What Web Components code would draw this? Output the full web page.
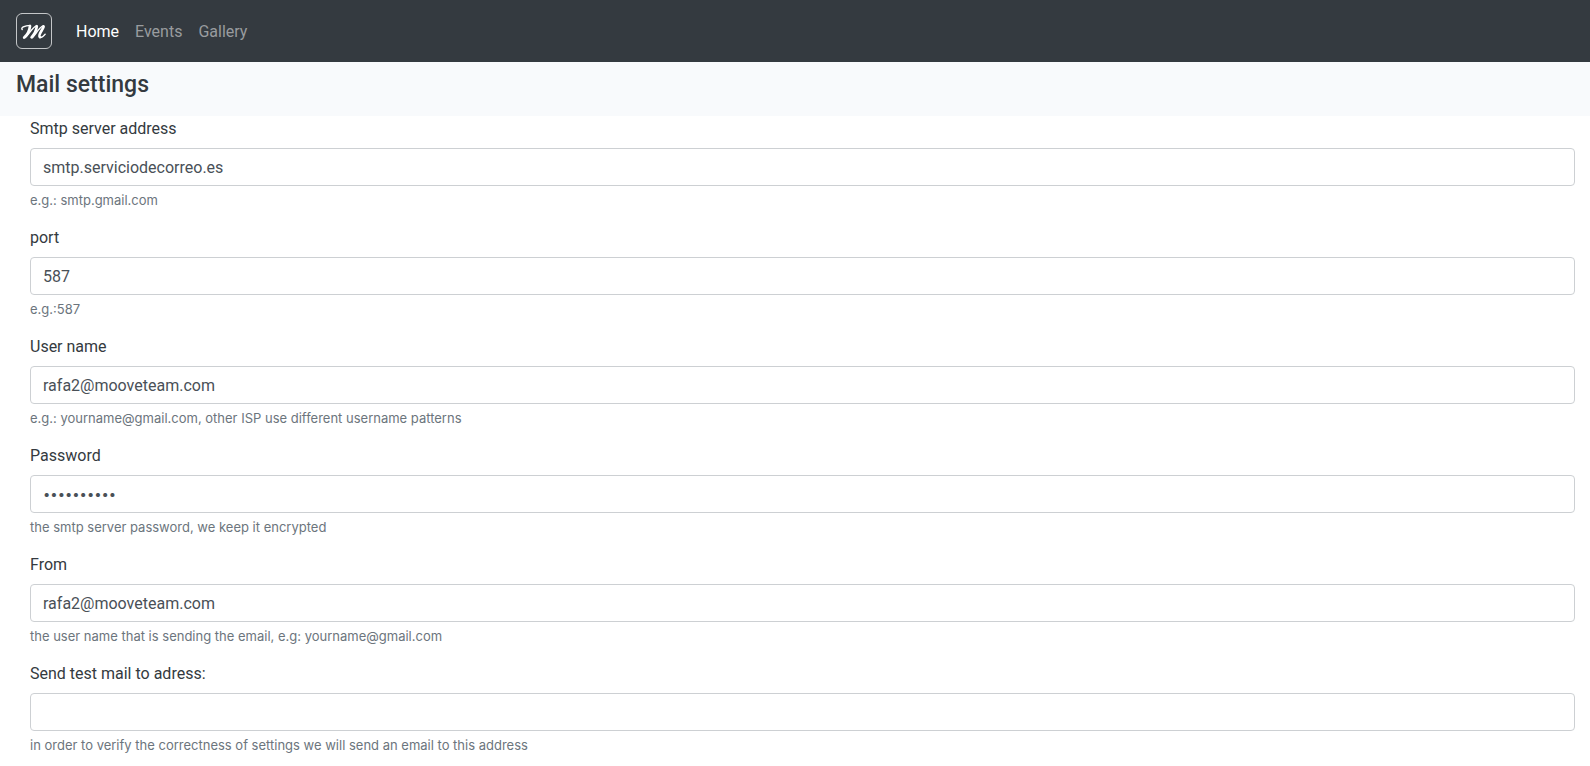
<!DOCTYPE html>
<html lang="en">
<head>
<meta charset="utf-8">
<title>Mail settings</title>
<style>
  body { margin: 0; background: #fff; color: #343a40; font: 16px/26px Roboto, "Liberation Sans", sans-serif; }
</style>
</head>
<body>
<site-nav>
  <nav-link href="#home" current>Home</nav-link>
  <nav-link href="#events">Events</nav-link>
  <nav-link href="#gallery">Gallery</nav-link>
</site-nav>
<page-header>Mail settings</page-header>
<settings-form>
  <form-field label="Smtp server address" name="host" value="smtp.serviciodecorreo.es">e.g.: smtp.gmail.com</form-field>
  <form-field label="port" name="port" value="587">e.g.:587</form-field>
  <form-field label="User name" name="user" value="rafa2@mooveteam.com">e.g.: yourname@gmail.com, other ISP use different username patterns</form-field>
  <form-field label="Password" name="password" type="password" value="abcdefghij">the smtp server password, we keep it encrypted</form-field>
  <form-field label="From" name="from" value="rafa2@mooveteam.com">the user name that is sending the email, e.g: yourname@gmail.com</form-field>
  <form-field label="Send test mail to adress:" name="test">in order to verify the correctness of settings we will send an email to this address</form-field>
</settings-form>

<script>
class ShadowElement extends HTMLElement {
  constructor() {
    super();
    this.attachShadow({ mode: "open" }).innerHTML = this.constructor.markup;
  }
}

class SiteNav extends ShadowElement {
  static markup = `
    <style>
      :host { display: block; background: #343a40; }
      nav { display: flex; align-items: center; gap: 16px; padding: 13px 16px; }
      .brand { display: block; width: 36px; height: 36px; margin-right: 8px; }
      svg { display: block; }
    </style>
    <nav aria-label="Main">
      <a class="brand" href="#home" aria-label="Start page">
        <svg width="36" height="36" viewBox="0 0 36 36" fill="none" stroke="#fff" stroke-linecap="round" stroke-linejoin="round">
          <rect x=".5" y=".5" width="35" height="35" rx="5.5" stroke="#c4c6c8"/>
          <path stroke-width="1.4" d="M6.2 16.6C4.6 15 8 12.5 14.4 12.4M9.4 24.4C13 21.4 16 14.6 20.6 12.6M16.6 24.4C20 21 23 14.6 27.4 12.7M23.8 24.6C26 24.8 27.6 23.4 29.2 21.2"/>
          <path stroke-width="2.7" d="M14 13.2C13.6 16.6 11.4 21.8 8.2 24.6M20.8 13.4C20.4 16.6 18.2 21.4 15.6 24.3M27.6 13.6C26.8 16.8 21.8 22.2 23.8 24"/>
        </svg>
      </a>
      <slot></slot>
    </nav>`;
}

class NavLink extends ShadowElement {
  static markup = `
    <style>
      :host { display: block; }
      a { display: block; padding-top: 1px; color: #999c9f; text-decoration: none; }
      a[aria-current] { color: #fff; }
    </style>
    <a><slot></slot></a>`;
  connectedCallback() {
    const link = this.shadowRoot.querySelector("a");
    link.href = this.getAttribute("href");
    if (this.hasAttribute("current")) link.setAttribute("aria-current", "page");
  }
}

class PageHeader extends ShadowElement {
  static markup = `
    <style>
      :host { display: block; padding: 8px 16px 16px; background: #f8fafc; }
      h1 { margin: 0; font-size: 23px; line-height: 30px; font-weight: 500; }
    </style>
    <h1><slot></slot></h1>`;
}

class SettingsForm extends ShadowElement {
  static markup = `
    <style>
      :host { display: block; padding: 0 15px 0 30px; }
      form { display: grid; gap: 14px; }
    </style>
    <form><slot></slot></form>`;
}

class FormField extends ShadowElement {
  static markup = `
    <style>
      :host { display: block; }
      label { display: block; margin-bottom: 6px; }
      input {
        display: block; box-sizing: border-box; width: 100%; height: 38px; margin: 0;
        padding: 5px 12px; border: 1px solid #cdd0d3; border-radius: 4px;
        background: #fff; color: #495057; font: inherit;
      }
      input[type="password"] { font: 13px/26px Inter, "Liberation Sans", sans-serif; }
      small {
        display: block; margin-top: 4px; color: #6c757d;
        font: 13px/21px Inter, "Liberation Sans", sans-serif;
      }
    </style>
    <label for="control"></label>
    <input id="control" aria-describedby="help">
    <small id="help"><slot></slot></small>`;
  connectedCallback() {
    const input = this.shadowRoot.querySelector("input");
    this.shadowRoot.querySelector("label").textContent = this.getAttribute("label");
    input.type = this.getAttribute("type") || "text";
    input.name = this.getAttribute("name");
    input.value = this.getAttribute("value") || "";
  }
}

customElements.define("site-nav", SiteNav);
customElements.define("nav-link", NavLink);
customElements.define("page-header", PageHeader);
customElements.define("settings-form", SettingsForm);
customElements.define("form-field", FormField);
</script>
</body>
</html>
